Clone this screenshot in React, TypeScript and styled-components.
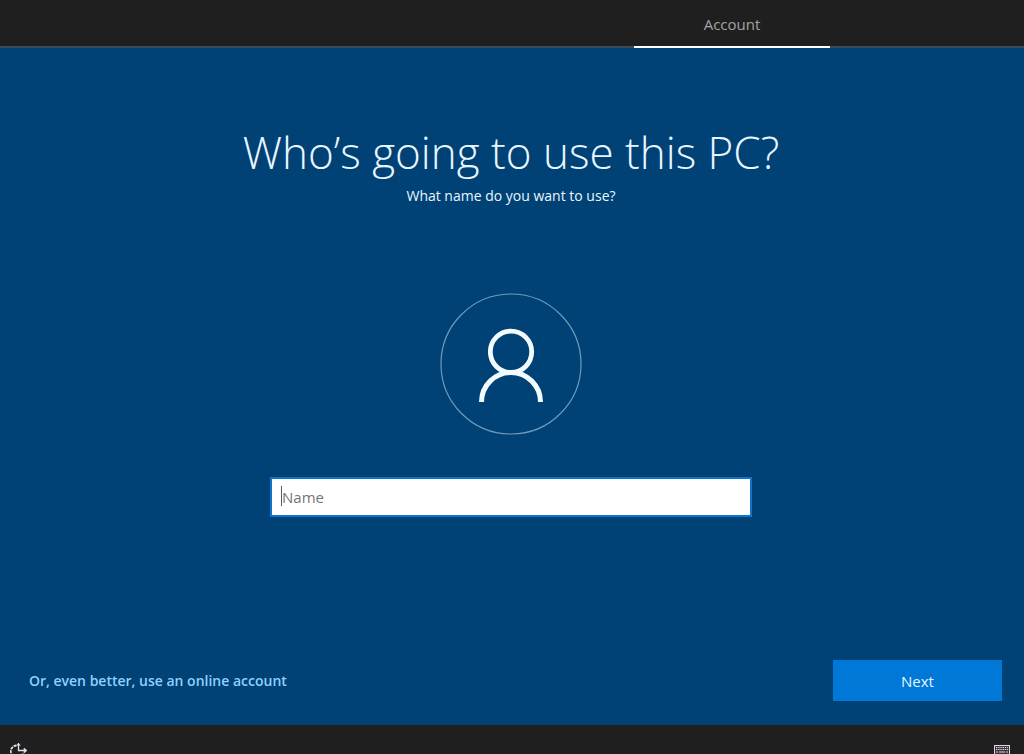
import React, { useState } from "react";
import styled, { createGlobalStyle } from "styled-components";

const GlobalStyle = createGlobalStyle`
  * { box-sizing: border-box; }
  body {
    margin: 0;
    background: #1f1f1f;
    font-family: "Segoe UI", "Open Sans", "Noto Sans", sans-serif;
    font-size: 15px;
    line-height: 20px;
    color: #e9f6ff;
  }
`;

const Screen = styled.div`
  display: flex;
  flex-direction: column;
  height: 100vh;
  min-height: 640px;
  overflow: hidden;
`;

const TopBar = styled.header`
  display: grid;
  grid-template-columns: 634fr 196fr 194fr;
  height: 48px;
  flex: none;
  background: #1f1f1f;
  box-shadow: inset 0 -2px #3d4a55;
`;

const Step = styled.a`
  grid-column: 2;
  display: flex;
  align-items: center;
  justify-content: center;
  border-bottom: 2px solid #ffffff;
  padding-top: 2px;
  color: #a3a3a3;
  text-decoration: none;
`;

const Stage = styled.main`
  flex: 1;
  display: flex;
  flex-direction: column;
  background: #004275;
`;

const Form = styled.form`
  flex: 1;
  display: flex;
  flex-direction: column;
  align-items: center;
  padding: 72px 24px 24px 22px;
`;

const Title = styled.h1`
  margin: 0;
  font-family: "Segoe UI Light", "Open Sans", sans-serif;
  font-size: 44px;
  line-height: 64px;
  font-weight: 300;
  text-align: center;
`;

const Subtitle = styled.p`
  margin: 2px 0 0;
  font-size: 14px;
  font-weight: 500;
`;

const Avatar = styled.svg`
  width: 142px;
  height: 142px;
  margin-top: 87px;
  flex: none;
`;

const NameField = styled.label`
  position: relative;
  display: block;
  width: 100%;
  max-width: 482px;
  margin-top: 42px;
`;

const NameInput = styled.input`
  display: block;
  width: 100%;
  height: 40px;
  padding: 0 10px;
  border: 2px solid #1173c7;
  border-radius: 0;
  outline: none;
  background: #ffffff;
  color: #1f1f1f;
  font: inherit;
  &::placeholder { color: #767676; opacity: 1; }
`;

const Caret = styled.span`
  position: absolute;
  left: 11px;
  top: 9px;
  width: 1px;
  height: 20px;
  background: #5a5a5a;
  pointer-events: none;
`;

const Actions = styled.footer`
  display: flex;
  align-items: center;
  justify-content: space-between;
  flex: none;
  padding: 0 22px 24px 29px;
`;

const OnlineLink = styled.a`
  color: #8fd0ff;
  font-size: 14px;
  font-weight: 600;
  text-decoration: none;
`;

const NextButton = styled.button`
  width: 169px;
  height: 41px;
  padding: 0;
  border: 0;
  background: #0078d7;
  color: #e9f6ff;
  font: inherit;
`;

const BottomBar = styled.nav`
  display: flex;
  justify-content: space-between;
  align-items: flex-start;
  flex: none;
  height: 29px;
  padding: 18px 14px 0 10px;
  overflow: hidden;
  background: #1f1f1f;
`;

const IconButton = styled.button`
  display: block;
  padding: 0;
  border: 0;
  background: none;
  line-height: 0;
`;

const PersonIcon = () => (
  <Avatar viewBox="0 0 142 142" fill="none" aria-hidden="true">
    <circle cx="71" cy="71" r="70" stroke="#6d9bbd" strokeWidth="1.2" />
    <circle cx="71" cy="58.8" r="20.7" stroke="#f2fcff" strokeWidth="4.8" />
    <path d="M41.500 109A29.500 29.500 0 0 1 100.500 109" stroke="#f2fcff" strokeWidth="5" />
  </Avatar>
);

const EaseIcon = () => (
  <svg width="18" height="17" viewBox="0 0 18 17" fill="none" stroke="#e8dfee" aria-hidden="true">
    <path d="M6.500 2.500A6 6 0 0 0 7 14.500A6 6 0 0 0 13 10" strokeWidth="1.800" strokeDasharray="3 .8" />
    <path d="M8.500 0V7.500H15" strokeWidth="1.300" />
    <path d="M6.500 2.500L8.500 .5L10.500 2.500M14 5L17 7.500L14 10Z" fill="#e8dfee" strokeWidth=".6" />
  </svg>
);

const KeyboardIcon = () => (
  <svg width="16" height="12" viewBox="0 0 16 12" fill="none" stroke="#ded6e2" aria-hidden="true">
    <rect x=".5" y="2.500" width="15" height="9" fill="#3a343c" />
    <path d="M2 4.500H14M2 6.500H14" strokeDasharray="1.400 .8" />
    <path d="M2 9H4M5 9H11M12 9H14" />
  </svg>
);

export default function App() {
  const [name, setName] = useState("");
  return (
    <>
      <GlobalStyle />
      <Screen>
        <TopBar>
          <Step href="#account" aria-current="step">Account</Step>
        </TopBar>
        <Stage id="account">
          <Form id="user-form" onSubmit={(e) => e.preventDefault()}>
            <Title>Who’s going to use this PC?</Title>
            <Subtitle>What name do you want to use?</Subtitle>
            <PersonIcon />
            <NameField>
              <NameInput
                aria-label="Name"
                placeholder="Name"
                value={name}
                onChange={(e) => setName(e.target.value)}
              />
              {name === "" && <Caret />}
            </NameField>
          </Form>
          <Actions>
            <OnlineLink href="#online">Or, even better, use an online account</OnlineLink>
            <NextButton type="submit" form="user-form">Next</NextButton>
          </Actions>
        </Stage>
        <BottomBar>
          <IconButton type="button" aria-label="Ease of access"><EaseIcon /></IconButton>
          <IconButton type="button" aria-label="Keyboard"><KeyboardIcon /></IconButton>
        </BottomBar>
      </Screen>
    </>
  );
}
